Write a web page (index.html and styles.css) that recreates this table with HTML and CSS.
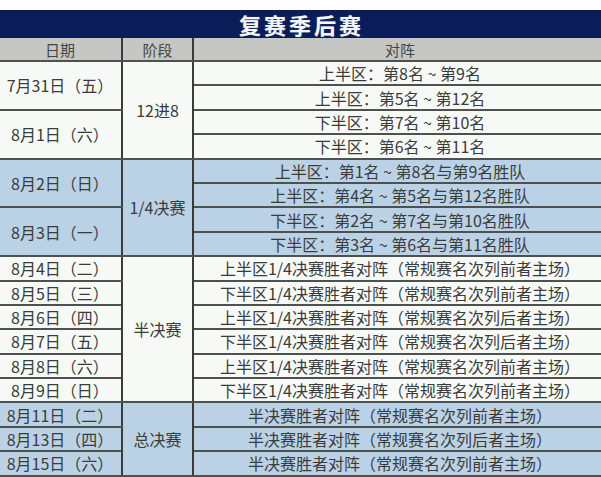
FILE: index.html
```html
<!DOCTYPE html>
<html lang="zh">
<head>
<meta charset="utf-8">
<title>复赛季后赛</title>
<link rel="stylesheet" href="styles.css">
</head>
<body>
<div class="sheet">
  <div class="title">复赛季后赛</div>
  <table class="grid">
    <colgroup>
      <col class="c-date">
      <col class="c-stage">
      <col class="c-match">
    </colgroup>
    <thead>
      <tr class="head"><th>日期</th><th>阶段</th><th>对阵</th></tr>
    </thead>
    <tbody class="white">
      <tr><td rowspan="2">7月31日（五）</td><td rowspan="4" class="stage">12进8</td><td>上半区：第8名 ~ 第9名</td></tr>
      <tr><td>上半区：第5名 ~ 第12名</td></tr>
      <tr><td rowspan="2">8月1日（六）</td><td>下半区：第7名 ~ 第10名</td></tr>
      <tr><td>下半区：第6名 ~ 第11名</td></tr>
    </tbody>
    <tbody class="blue">
      <tr><td rowspan="2">8月2日（日）</td><td rowspan="4" class="stage">1/4决赛</td><td>上半区：第1名 ~ 第8名与第9名胜队</td></tr>
      <tr><td>上半区：第4名 ~ 第5名与第12名胜队</td></tr>
      <tr><td rowspan="2">8月3日（一）</td><td>下半区：第2名 ~ 第7名与第10名胜队</td></tr>
      <tr><td>下半区：第3名 ~ 第6名与第11名胜队</td></tr>
    </tbody>
    <tbody class="white">
      <tr><td>8月4日（二）</td><td rowspan="6" class="stage">半决赛</td><td>上半区1/4决赛胜者对阵（常规赛名次列前者主场）</td></tr>
      <tr><td>8月5日（三）</td><td>下半区1/4决赛胜者对阵（常规赛名次列前者主场）</td></tr>
      <tr><td>8月6日（四）</td><td>上半区1/4决赛胜者对阵（常规赛名次列后者主场）</td></tr>
      <tr><td>8月7日（五）</td><td>下半区1/4决赛胜者对阵（常规赛名次列后者主场）</td></tr>
      <tr><td>8月8日（六）</td><td>上半区1/4决赛胜者对阵（常规赛名次列前者主场）</td></tr>
      <tr><td>8月9日（日）</td><td>下半区1/4决赛胜者对阵（常规赛名次列前者主场）</td></tr>
    </tbody>
    <tbody class="blue">
      <tr><td>8月11日（二）</td><td rowspan="3" class="stage">总决赛</td><td>半决赛胜者对阵（常规赛名次列前者主场）</td></tr>
      <tr><td>8月13日（四）</td><td>半决赛胜者对阵（常规赛名次列后者主场）</td></tr>
      <tr><td>8月15日（六）</td><td>半决赛胜者对阵（常规赛名次列前者主场）</td></tr>
    </tbody>
  </table>
</div>
</body>
</html>
```

FILE: styles.css
```css
html, body {
  margin: 0;
  padding: 0;
  background: #ffffff;
  overflow: hidden;
}

body {
  width: 601px;
  height: 477px;
  font-family: "Noto Sans CJK SC", "Noto Sans", sans-serif;
  color: #3a3c3a;
}

.sheet {
  margin: 10px 0 0 -3px;
  width: 609px;
}

.title {
  height: 28px;
  line-height: 28px;
  background: #0b1d58;
  color: #f4f6fa;
  font-size: 22px;
  font-weight: 700;
  letter-spacing: 3px;
  text-align: center;
  text-shadow: 0 0 1px rgba(255,255,255,0.4);
}

.grid {
  width: 609px;
  border-collapse: collapse;
  table-layout: fixed;
}

.c-date { width: 124px; }
.c-stage { width: 71px; }
.c-match { width: 414px; }

.grid th,
.grid td {
  padding: 0;
  text-align: center;
  vertical-align: middle;
  font-weight: 400;
  white-space: nowrap;
  border: 2px solid #4e524e;
  border-left-color: #3a3c3a;
  border-right-color: #3a3c3a;
}

.head th {
  height: 22px;
  background: #c6c7c4;
  font-size: 15px;
  color: #444644;
  border-top: 0;
}

.grid td {
  height: 22.4px;
  font-size: 16px;
  line-height: 20px;
}

.white td { background: #f7f9f7; }
.blue td { background: #bad1e6; }

.stage { font-size: 16px; }
```
